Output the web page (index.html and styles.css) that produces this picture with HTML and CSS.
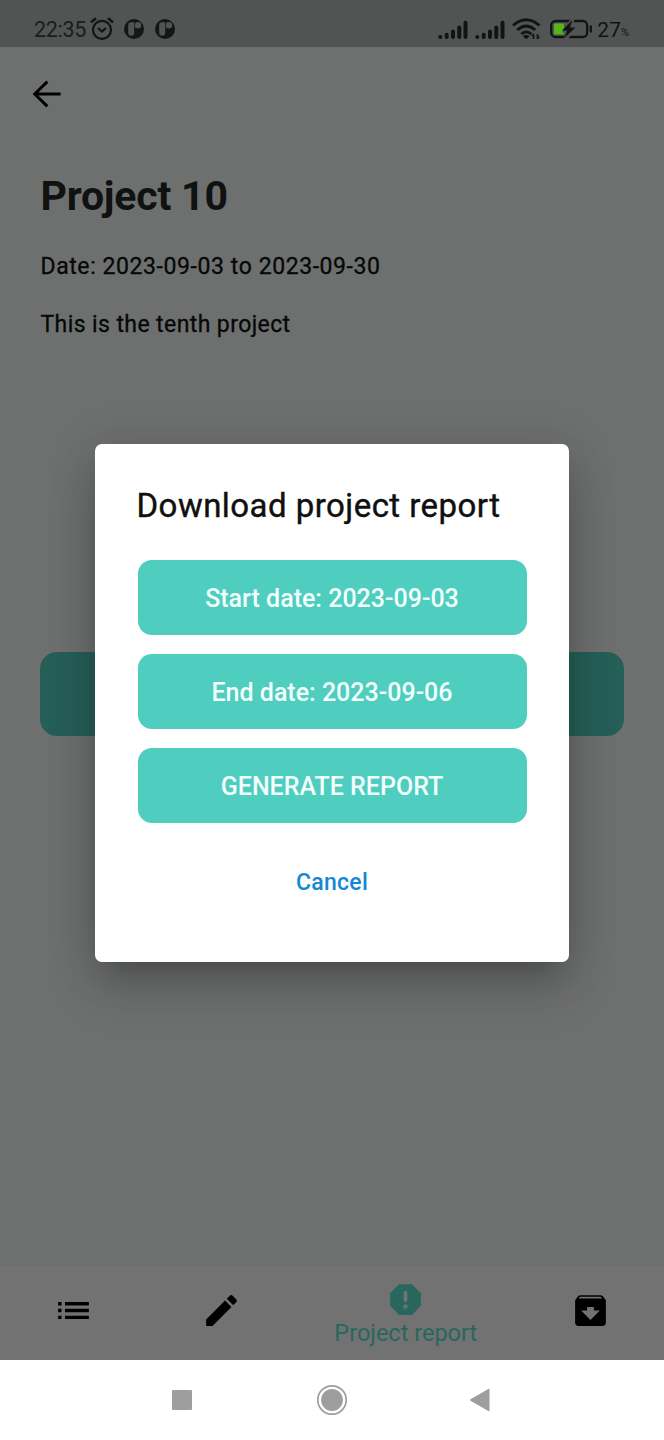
FILE: index.html
```html
<!DOCTYPE html>
<html lang="en">
<head>
<meta charset="utf-8">
<title>Project 10</title>
<link rel="stylesheet" href="styles.css">
</head>
<body>
<div class="screen">
  <header class="status">
    <div class="status-left">
      <span class="clock">22:35</span>
      <svg class="alarm" width="24" height="24" viewBox="0 0 24 24" fill="none" stroke="currentColor" stroke-width="2.200"><circle cx="12" cy="12.800" r="9"/><path d="M.9 5.400 6 1.200M18 1.200l5.100 4.200" stroke-width="2.500"/><path d="m8 11 4 3.500 4-3.500"/></svg>
      <svg class="app-dot" width="20" height="20" viewBox="0 0 20 20"><circle cx="10" cy="10" r="10" fill="#151716"/><path d="M4.200 6.500Q4.200 3.300 7 3.300h3.200v10.400a3 3 0 0 1-6 0z" fill="#525453"/><circle cx="14" cy="6.300" r="3.200" fill="#525453"/></svg>
      <svg class="app-dot second" width="20" height="20" viewBox="0 0 20 20"><circle cx="10" cy="10" r="10" fill="#151716"/><path d="M4.200 6.500Q4.200 3.300 7 3.300h3.200v10.400a3 3 0 0 1-6 0z" fill="#525453"/><circle cx="14" cy="6.300" r="3.200" fill="#525453"/></svg>
    </div>
    <div class="status-right">
      <svg class="signal" width="30" height="20" viewBox="0 0 30 20" stroke="currentColor" stroke-width="4" stroke-linecap="round"><path d="M2.300 17v.1M8.700 14.700v2.400M15 11.500v5.600M21.300 7.500v9.600M27.500 2.800v14.300"/></svg>
      <svg class="signal signal-two" width="30" height="20" viewBox="0 0 30 20" stroke="currentColor" stroke-width="4" stroke-linecap="round"><path d="M2.300 17v.1M8.700 14.700v2.400M15 11.500v5.600M21.300 7.500v9.600M27.500 2.800v14.300"/></svg>
      <svg class="wifi" width="29" height="22" viewBox="0 0 29 22" fill="none" stroke="currentColor" stroke-width="2.800"><path d="M1 7.500q13-11.500 26.500 0M5.200 12q9-8 18 0M9.300 16q5-4.300 10 0"/><path d="m10.800 18.200 3.500 3 3.400-3q-3.400-2.600-6.900 0z" fill="currentColor" stroke="none"/><path d="M21.500 21v-4.500M25.500 16v4.500" stroke-width="1.700"/><path d="m18.800 18 2.700-3v3zM28.200 18.700l-2.700 3v-3z" fill="currentColor" stroke="none"/></svg>
      <svg class="battery" width="43" height="20" viewBox="0 0 43 20"><rect x="1.200" y="2" width="36" height="16" rx="4.500" fill="none" stroke="currentColor" stroke-width="2.300"/><rect x="4" y="4.500" width="10" height="11" rx="1.500" fill="#55b51b"/><path d="M20.500 0h4l-1.500 6.500h5L18 20h-4l1.500-6.500h-4z" fill="#525453"/><path d="M22.500 1 12 11.500h5L14.500 19 25.500 8.500H20z" fill="currentColor"/><path d="M40.800 7.500v5" stroke="currentColor" stroke-width="2.300" stroke-linecap="round"/></svg>
      <span class="percent">27</span><span class="percent-sign">%</span>
    </div>
  </header>

  <main class="page">
    <svg class="back" width="42" height="42" viewBox="0 0 24 24" fill="none" stroke="#000" stroke-width="1.700"><path d="M19.800 12H5M12.200 4.900 5 12l7.200 7.100"/></svg>
    <h1 class="title">Project 10</h1>
    <p class="dates">Date: 2023-09-03 to 2023-09-30</p>
    <p class="description">This is the tenth project</p>
    <div class="page-button"></div>
  </main>

  <nav class="tabs">
    <div class="tab"><svg width="41" height="41" viewBox="0 0 24 24"><path d="M3 13h2v-2H3v2zm0 4h2v-2H3v2zm0-8h2V7H3v2zm4 4h14v-2H7v2zm0 4h14v-2H7v2zM7 7v2h14V7H7z"/></svg></div>
    <div class="tab"><svg width="41" height="41" viewBox="0 0 24 24"><path d="M3 17.250V21h3.750L17.810 9.940l-3.750-3.750L3 17.250zM20.710 7.040c.39-.39.39-1.020 0-1.410l-2.340-2.340a.996.996 0 0 0-1.410 0l-1.830 1.830 3.750 3.750 1.830-1.830z"/></svg></div>
    <div class="tab active"><svg width="41" height="41" viewBox="0 0 24 24"><path fill="#28675e" d="M15.730 3H8.270L3 8.270v7.460L8.270 21h7.460L21 15.730V8.270z"/><path d="M12 8v4.300" stroke="#727272" stroke-width="2.200" stroke-linecap="round"/><circle cx="12" cy="16.100" r="1.250" fill="#727272"/></svg><span class="tab-label">Project report</span></div>
    <div class="tab"><svg width="41" height="41" viewBox="0 0 24 24"><path fill-rule="evenodd" d="m20.500 5.200-1.400-1.700Q18.700 3 18 3H6q-.7 0-1.100.5L3.500 5.200Q3 5.800 3 6.500V19q0 2 2 2h14q2 0 2-2V6.500q0-.7-.5-1.300zM12 17.500 6.500 12H10v-2h4v2h3.500zM5.100 5l.8-1h12l.9 1z"/></svg></div>
  </nav>

  <footer class="system-nav">
    <svg width="320" height="32" viewBox="0 0 320 32" fill="#9e9e9e"><rect x="0" y="6" width="20" height="20" rx="1"/><circle cx="160" cy="16" r="14.200" fill="none" stroke="#9e9e9e" stroke-width="1.700"/><circle cx="160" cy="16" r="10.900"/><path d="m298.500 15.200 17.800-10.300q1.200-.6 1.200.8v20.600q0 1.400-1.200.8l-17.800-10.300q-1-.8 0-1.600z"/></svg>
  </footer>

  <div class="overlay">
    <section class="dialog">
      <h2 class="dialog-title">Download project report</h2>
      <button class="action">Start date: 2023-09-03</button>
      <button class="action">End date: 2023-09-06</button>
      <button class="action">GENERATE REPORT</button>
      <button class="cancel">Cancel</button>
    </section>
  </div>
</div>
</body>
</html>
```
FILE: styles.css
```css
* { box-sizing: border-box; }
body { margin: 0; font-family: Roboto, sans-serif; }
h1, h2, p { margin: 0; font-weight: 400; }
svg { display: block; flex: none; }
button { border: 0; padding: 0; font-family: inherit; background: none; }

.screen {
  position: relative;
  display: flex;
  flex-direction: column;
  width: 664px;
  height: 1440px;
  overflow: hidden;
  background: #6e706f;
}

.status {
  display: flex;
  justify-content: space-between;
  height: 47px;
  padding: 17px 34px 0;
  background: #525453;
  color: #121413;
}
.status-left, .status-right { display: flex; height: 24px; align-items: center; }
.status-right { margin-right: 1px; }
.clock { font-size: 21.500px; line-height: 24px; padding-top: 1px; width: 56px; color: #1b1d1c; letter-spacing: -0.3px; }
.app-dot { margin-left: 10px; }
.app-dot.second { margin-left: 11px; }
.signal { margin-top: 2px; }
.signal-two { margin-left: 7px; }
.wifi { margin-left: 7px; }
.battery { margin-left: 9px; }
.percent { margin-left: 4px; padding-top: 2px; font-size: 21px; line-height: 24px; }
.percent-sign { font-size: 11px; line-height: 12px; padding-top: 8px; }

.page { flex: 1; padding: 26px 40px 0; }
.back { margin-left: -14px; }
.title {
  margin-top: 57px;
  padding-left: 0.5px;
  font-size: 41px;
  line-height: 48px;
  font-weight: 700;
  letter-spacing: -0.2px;
  color: #101211;
}
.dates, .description {
  padding-left: 0.5px;
  font-size: 23px;
  line-height: 28px;
  letter-spacing: 0.4px;
  -webkit-text-stroke: 0.3px currentColor;
  color: #060807;
}
.dates { margin-top: 33px; letter-spacing: 0.58px; }
.description { margin-top: 30px; }
.page-button {
  height: 84px;
  margin-top: 313px;
  border-radius: 17px;
  background: #265f58;
}

.tabs { display: flex; height: 94px; background: #727272; }
.tab {
  flex: 2;
  display: flex;
  flex-direction: column;
  align-items: center;
  padding-top: 24px;
}
.tab.active { flex: 3; padding-top: 13px; color: #28675e; }
.tab-label { font-size: 23.500px; line-height: 28px; margin-top: -1px; white-space: nowrap; }

.system-nav {
  display: flex;
  justify-content: center;
  height: 80px;
  padding-top: 24px;
  background: #fff;
}

.overlay {
  position: absolute;
  inset: 46px 0 80px;
  display: flex;
  align-items: center;
  justify-content: center;
}
.dialog {
  display: flex;
  flex-direction: column;
  width: 474px;
  height: 518px;
  padding: 42px 42.500px 0;
  border-radius: 7px;
  background: #fff;
  box-shadow: 0 18px 24px -12px rgba(0, 0, 0, .17), 0 30px 52px 0 rgba(0, 0, 0, .14), 0 4px 50px 2px rgba(0, 0, 0, .12);
}
.dialog-title {
  margin-bottom: 34px;
  margin-left: -1px;
  font-size: 33px;
  line-height: 40px;
  letter-spacing: 0.46px;
  -webkit-text-stroke: 0.4px currentColor;
  white-space: nowrap;
  color: #101010;
}
.action {
  flex: none;
  height: 75px;
  margin-bottom: 19px;
  padding-top: 2px;
  border-radius: 14px;
  background: #4fcdbf;
  color: #f3fffd;
  font-size: 25px;
  font-weight: 500;
}
.cancel {
  align-self: center;
  margin-top: 27px;
  font-size: 23px;
  line-height: 28px;
  letter-spacing: 0.3px;
  font-weight: 500;
  color: #1389d2;
}
```
